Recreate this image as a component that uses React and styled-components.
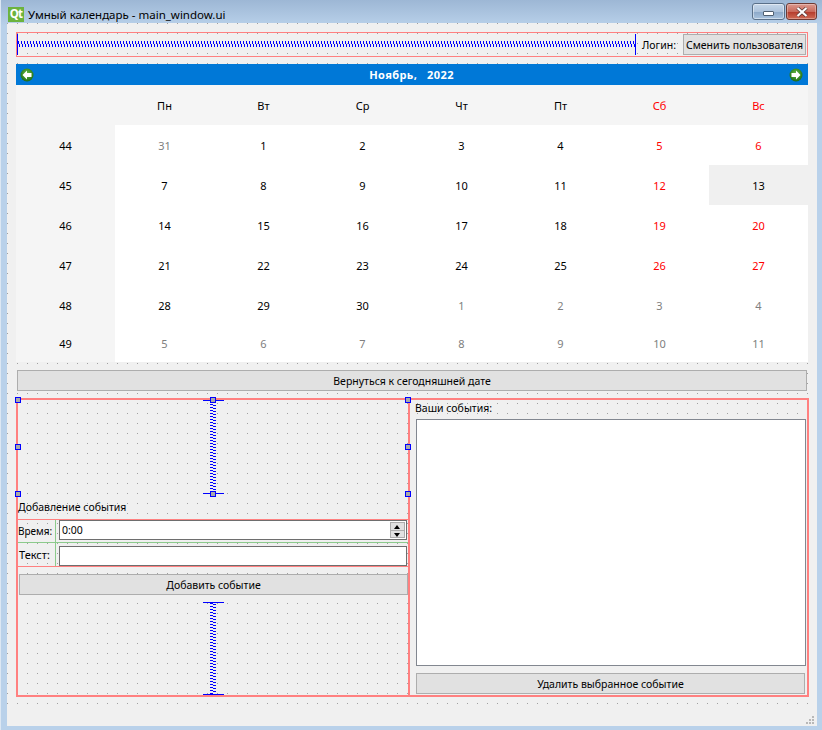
import styled, { createGlobalStyle } from "styled-components";

const GlobalStyle = createGlobalStyle`
  html, body {
    margin: 0;
    padding: 0;
    background: #b9d1ea;
  }
`;

const weeks = [
  [44, [[31, "o"], [1], [2], [3], [4], [5, "w"], [6, "w"]]],
  [45, [[7], [8], [9], [10], [11], [12, "w"], [13, "s"]]],
  [46, [[14], [15], [16], [17], [18], [19, "w"], [20, "w"]]],
  [47, [[21], [22], [23], [24], [25], [26, "w"], [27, "w"]]],
  [48, [[28], [29], [30], [1, "o"], [2, "o"], [3, "o"], [4, "o"]]],
  [49, [[5, "o"], [6, "o"], [7, "o"], [8, "o"], [9, "o"], [10, "o"], [11, "o"]]],
];

const dayNames = ["Пн", "Вт", "Ср", "Чт", "Пт", "Сб", "Вс"];

const handles = [
  ["-3px", "-3px"],
  ["-3px", "44px"],
  ["-3px", "91px"],
  ["192px", "-3px"],
  ["192px", "91px"],
  ["387px", "-3px"],
  ["387px", "44px"],
  ["387px", "91px"],
];

function Arrow({ id, flip }) {
  return (
    <ArrowIcon $flip={flip} width="14" height="14" viewBox="0 0 14 14">
      <defs>
        <radialGradient id={id} cx="50%" cy="40%" r="60%">
          <stop offset="0%" stopColor="#6cc24a" />
          <stop offset="100%" stopColor="#1c6b12" />
        </radialGradient>
      </defs>
      <circle cx="7" cy="7" r="6.5" fill={"url(#" + id + ")"} />
      <path d="M2.5 7 L7 2.5 V5 H11.5 V9 H7 V11.5 Z" fill="#fff" />
    </ArrowIcon>
  );
}

function App() {
  return (
    <Window>
      <GlobalStyle />
      <TitleBar>
        <QtLogo>Qt</QtLogo>
        <Title>Умный календарь - main_window.ui</Title>
        <Controls>
          <MinButton><MinGlyph /></MinButton>
          <CloseButton>
            <svg width="12" height="10" viewBox="0 0 12 10">
              <path d="M1.5 1 L10.5 9 M10.5 1 L1.5 9" stroke="#5a3a38" strokeWidth="3.6" />
              <path d="M1.5 1 L10.5 9 M10.5 1 L1.5 9" stroke="#fff" strokeWidth="2.2" />
            </svg>
          </CloseButton>
        </Controls>
      </TitleBar>
      <Client>
        <Form>
          <TopLayout>
            <HSpring />
            <Label>Логин:</Label>
            <SwitchButton>Сменить пользователя</SwitchButton>
          </TopLayout>
          <Calendar>
            <NavBar>
              <Arrow id="prev" />
              <Month>Ноябрь,&nbsp;&nbsp; 2022</Month>
              <Arrow id="next" flip />
            </NavBar>
            <DayGrid>
              <HeadCell />
              {dayNames.map((d, i) => (
                <HeadCell key={d} $red={i > 4}>{d}</HeadCell>
              ))}
              {weeks.map(([num, days]) => [
                <HeadCell key={num}>{num}</HeadCell>,
                ...days.map(([d, kind], i) => (
                  <DayCell key={num + "-" + i} $kind={kind}>{d}</DayCell>
                )),
              ])}
            </DayGrid>
          </Calendar>
          <BackButton>Вернуться к сегодняшней дате</BackButton>
          <Columns>
            <LeftPane>
              {handles.map(([x, y]) => (
                <Handle key={x + y} $x={x} $y={y} />
              ))}
              <SpringBox $h="94px"><VSpring /></SpringBox>
              <FormTitle>Добавление события</FormTitle>
              <FormBox>
                <FormLabel $first>Время:</FormLabel>
                <InputCell $first>
                  <TimeInput>
                    0:00
                    <Spinner>
                      <SpinUp />
                      <SpinDown />
                    </Spinner>
                  </TimeInput>
                </InputCell>
                <FormLabel>Текст:</FormLabel>
                <InputCell>
                  <TextInput />
                </InputCell>
              </FormBox>
              <AddButton>Добавить событие</AddButton>
              <SpringBox $h="93px" $gap="7px"><VSpring /></SpringBox>
            </LeftPane>
            <RightPane>
              <ListTitle>Ваши события:</ListTitle>
              <EventList />
              <DeleteButton>Удалить выбранное событие</DeleteButton>
            </RightPane>
          </Columns>
        </Form>
        <Grip>
          <svg width="8" height="8" viewBox="0 0 8 8" fill="#b8b8b8">
            <rect x="6" y="0" width="2" height="2" />
            <rect x="3" y="3" width="2" height="2" />
            <rect x="6" y="3" width="2" height="2" />
            <rect x="0" y="6" width="2" height="2" />
            <rect x="3" y="6" width="2" height="2" />
            <rect x="6" y="6" width="2" height="2" />
          </svg>
        </Grip>
      </Client>
    </Window>
  );
}

const Window = styled.div`
  width: 822px;
  height: 730px;
  box-sizing: border-box;
  border-left: 1px solid #dce7f3;
  display: flex;
  flex-direction: column;
  background: linear-gradient(to bottom, #9db7d5 0, #b9d1ea 26px);
  font-family: "Noto Sans", "Liberation Sans", sans-serif;
  font-size: 10.5px;
  color: #000;
  overflow: hidden;
`;

const TitleBar = styled.div`
  height: 23px;
  flex: none;
  display: flex;
  align-items: flex-start;
  padding: 0 5px 0 7px;
`;

const QtLogo = styled.div`
  width: 16px;
  height: 15px;
  margin-top: 7px;
  background: #6cb33e;
  color: #fff;
  font-weight: 700;
  font-size: 11.5px;
  line-height: 14px;
  text-align: center;
  letter-spacing: -0.8px;
  overflow: hidden;
`;

const Title = styled.div`
  margin: 7px 0 0 4px;
  font-size: 11.5px;
  line-height: 16px;
`;

const Controls = styled.div`
  margin: 3px 0 0 auto;
  display: flex;
  gap: 1px;
`;

const MinButton = styled.div`
  box-sizing: border-box;
  width: 33px;
  height: 17px;
  border: 1px solid #5a7089;
  border-radius: 3px;
  box-shadow: inset 0 0 0 1px rgba(255, 255, 255, 0.45);
  background: linear-gradient(to bottom, #c6d7ea 0, #adc3dc 50%, #8ba7c7 51%, #a9c3de 100%);
  display: flex;
  align-items: center;
  justify-content: center;
`;

const MinGlyph = styled.div`
  box-sizing: border-box;
  width: 11px;
  height: 5px;
  margin-top: 4px;
  background: #fff;
  border: 1px solid #4f5f70;
  border-radius: 1px;
`;

const CloseButton = styled.div`
  box-sizing: border-box;
  width: 31px;
  height: 17px;
  border: 1px solid #6e3a33;
  border-radius: 3px;
  box-shadow: inset 0 0 0 1px rgba(255, 255, 255, 0.3);
  background: linear-gradient(to bottom, #dc9a8f 0, #c96a5c 50%, #b3392a 51%, #cf6b55 100%);
  display: flex;
  align-items: center;
  justify-content: center;
`;

const Client = styled.div`
  position: relative;
  flex: none;
  width: 810px;
  height: 703px;
  margin-left: 6px;
  background: #f0f0f0;
`;

const Form = styled.div`
  width: 802px;
  height: 682px;
  padding: 9px 0 0 9px;
  box-sizing: border-box;
  background-color: #f0f0f0;
  background-image: linear-gradient(to right, #f0f0f0 9px, transparent 9px),
    linear-gradient(to bottom, transparent 9px, #a0a0a0 9px);
  background-size: 10px 10px;
  background-position: -9px 0, 0 -9px;
`;

const TopLayout = styled.div`
  width: 792px;
  height: 25px;
  box-sizing: border-box;
  display: flex;
  align-items: center;
  border: 1px solid #ff8080;
  padding: 0 1px 0 0;
`;

const HSpring = styled.div`
  flex: 1;
  height: 21px;
  box-sizing: border-box;
  border-left: 1px solid #0000ff;
  border-right: 1px solid #0000ff;
  background:
    repeating-linear-gradient(to right, #0000ff 0 1px, transparent 1px 3px) 0 7px / 100% 3px no-repeat,
    repeating-linear-gradient(to right, transparent 0 1px, #0000ff 1px 2px, transparent 2px 3px) 0 10px / 100% 3px no-repeat;
`;

const Label = styled.span`
  width: 41px;
  margin-left: 6px;
  white-space: nowrap;
`;

const PlainButton = styled.div`
  box-sizing: border-box;
  display: flex;
  align-items: center;
  justify-content: center;
  white-space: nowrap;
  background: #e1e1e1;
  border: 1px solid #adadad;
`;

const SwitchButton = styled(PlainButton)`
  width: 123px;
  height: 21px;
`;

const Calendar = styled.div`
  margin-top: 7px;
  width: 792px;
  font-size: 11px;
`;

const NavBar = styled.div`
  height: 21px;
  background: #0078d7;
  display: flex;
  align-items: center;
  justify-content: space-between;
  padding: 0 5px 0 4px;
`;

const ArrowIcon = styled.svg`
  transform: ${(p) => (p.$flip ? "scaleX(-1)" : "none")};
`;

const Month = styled.div`
  color: #fff;
  font-weight: 700;
  letter-spacing: 0.4px;
`;

const DayGrid = styled.div`
  display: grid;
  grid-template-columns: repeat(8, 99px);
  grid-template-rows: repeat(6, 40px) 37px;
  background: #fff;
`;

const HeadCell = styled.div`
  display: flex;
  align-items: center;
  justify-content: center;
  background: #f5f5f5;
  color: ${(p) => (p.$red ? "#ff0000" : "#000")};
`;

const DayCell = styled.div`
  display: flex;
  align-items: center;
  justify-content: center;
  background: ${(p) => (p.$kind === "s" ? "#f0f0f0" : "#fff")};
  color: ${(p) =>
    p.$kind === "o" ? "#808080" : p.$kind === "w" ? "#ff0000" : "#000"};
`;

const BackButton = styled(PlainButton)`
  margin: 8px 0 0 1px;
  width: 790px;
  height: 21px;
`;

const Columns = styled.div`
  margin-top: 7px;
  height: 299px;
  width: 793px;
  display: flex;
`;

const LeftPane = styled.div`
  position: relative;
  width: 393px;
  box-sizing: border-box;
  border: 2px solid #ff8080;
  border-right-width: 1px;
  display: flex;
  flex-direction: column;
`;

const RightPane = styled.div`
  width: 400px;
  box-sizing: border-box;
  border: 2px solid #ff8080;
  border-left-width: 1px;
  padding: 0 1px 1px 6px;
  display: flex;
  flex-direction: column;
`;

const Handle = styled.div`
  position: absolute;
  left: ${(p) => p.$x};
  top: ${(p) => p.$y};
  width: 4px;
  height: 4px;
  background: #a9a9a9;
  border: 1px solid #0000ff;
  z-index: 2;
`;

const SpringBox = styled.div`
  height: ${(p) => p.$h};
  margin-top: ${(p) => p.$gap || 0};
  flex: none;
  display: flex;
  justify-content: center;
`;

const VSpring = styled.div`
  width: 21px;
  box-sizing: border-box;
  border-top: 1px solid #0000ff;
  border-bottom: 1px solid #0000ff;
  background:
    repeating-linear-gradient(to bottom, #0000ff 0 1px, transparent 1px 3px) 7px 0 / 3px 100% no-repeat,
    repeating-linear-gradient(to bottom, transparent 0 1px, #0000ff 1px 2px, transparent 2px 3px) 10px 0 / 3px 100% no-repeat;
`;

const FormTitle = styled.div`
  height: 25px;
  line-height: 26px;
  flex: none;
  white-space: nowrap;
`;

const ListTitle = styled(FormTitle)`
  height: 19px;
  line-height: 16px;
  margin-left: -1px;
`;

const FormBox = styled.div`
  display: grid;
  grid-template-columns: 38px 1fr;
  grid-template-rows: 23px 23px;
  border-top: 1px solid #ff8080;
  border-bottom: 1px solid #ff8080;
  flex: none;
`;

const FormLabel = styled.div`
  display: flex;
  align-items: center;
  padding-left: ${(p) => (p.$first ? "0" : "1px")};
  font-size: ${(p) => (p.$first ? "10px" : "11px")};
  box-sizing: border-box;
  border-right: 1px solid #8ccb8c;
  border-bottom: ${(p) => (p.$first ? "1px solid #8ccb8c" : "none")};
`;

const InputCell = styled.div`
  box-sizing: border-box;
  padding: ${(p) => (p.$first ? "0 1px 1px 3px" : "3px 1px 0 3px")};
  border-bottom: ${(p) => (p.$first ? "1px solid #8ccb8c" : "none")};
`;

const InputBase = styled.div`
  box-sizing: border-box;
  height: 20px;
  background: #fff;
  border: 1px solid #6e6e6e;
`;

const TimeInput = styled(InputBase)`
  display: flex;
  align-items: center;
  justify-content: space-between;
  padding-left: 2px;
`;

const TextInput = styled(InputBase)``;

const Spinner = styled.div`
  width: 15px;
  height: 16px;
  display: flex;
  flex-direction: column;
  background: #e1e1e1;
  border: 1px solid #adadad;
  box-sizing: border-box;
  margin-right: 1px;
`;

const SpinUp = styled.div`
  flex: 1;
  position: relative;
  &::after {
    content: "";
    position: absolute;
    left: 3px;
    top: 2px;
    border-left: 3.5px solid transparent;
    border-right: 3.5px solid transparent;
    border-bottom: 4px solid #000;
  }
`;

const SpinDown = styled.div`
  flex: 1;
  position: relative;
  border-top: 1px solid #adadad;
  &::after {
    content: "";
    position: absolute;
    left: 3px;
    top: 2px;
    border-left: 3.5px solid transparent;
    border-right: 3.5px solid transparent;
    border-top: 4px solid #000;
  }
`;

const AddButton = styled(PlainButton)`
  margin: 7px 0 0 1px;
  height: 21px;
  flex: none;
`;

const EventList = styled.div`
  flex: 1;
  box-sizing: border-box;
  background: #fff;
  border: 1px solid #828790;
`;

const DeleteButton = styled(PlainButton)`
  margin-top: 7px;
  height: 21px;
  flex: none;
  width: 389px;
`;

const Grip = styled.div`
  position: absolute;
  right: 3px;
  bottom: 2px;
  width: 8px;
  height: 8px;
  line-height: 0;
`;

export default App;
